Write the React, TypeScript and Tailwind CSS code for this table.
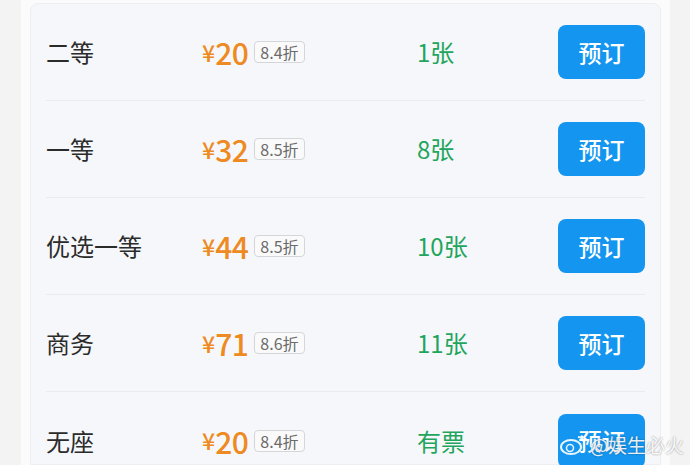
import React from 'react';

const rows = [
  { name: '二等', price: '20', discount: '8.4折', count: '1张' },
  { name: '一等', price: '32', discount: '8.5折', count: '8张' },
  { name: '优选一等', price: '44', discount: '8.5折', count: '10张' },
  { name: '商务', price: '71', discount: '8.6折', count: '11张' },
  { name: '无座', price: '20', discount: '8.4折', count: '有票' },
];

const App: React.FC = () => {
  return (
    <div
      className="w-[690px] h-[465px] overflow-hidden bg-[#f3f3f4] flex relative"
      style={{ fontFamily: '"Noto Sans CJK SC", "Noto Sans", sans-serif' }}
    >
      <div className="w-[21px] shrink-0" />
      <div className="w-[649px] shrink-0 bg-[#fbfbfc] px-[9px] pt-[3px]">
        <div className="h-full bg-[#f6f7fa] rounded-t-[8px] border border-[#eceef2] px-[15px]">
          {rows.map((r, i) => (
            <div
              key={i}
              className={`h-[97px] flex items-center ${i < rows.length - 1 ? 'border-b border-[#e9ebef]' : ''}`}
            >
              <div className="w-[156px] shrink-0 text-[24px] text-[#2b2b2b]">{r.name}</div>
              <div className="w-[215px] shrink-0 flex items-center">
                <span className="text-[23px] text-[#ee8a22] font-medium">¥</span>
                <span className="text-[30px] text-[#ee8a22] font-medium leading-none tracking-[-0.5px]">{r.price}</span>
                <span className="ml-[6px] h-[22px] px-[5px] flex items-center border border-[#d4d6da] rounded-[4px] bg-[#fafafa] text-[16px] text-[#6b6b6b] leading-none">
                  {r.discount}
                </span>
              </div>
              <div className="flex-1 text-[24px] text-[#1fa55d]">{r.count}</div>
              <button className="w-[87px] h-[54px] bg-[#1496f0] rounded-[8px] text-white text-[23px] font-medium">
                预订
              </button>
            </div>
          ))}
        </div>
      </div>
      <div className="flex-1" />
      <div className="absolute right-[6px] bottom-[6px] flex items-center gap-[4px] text-white/90 text-[19px] [text-shadow:0_0_2px_rgba(0,0,0,0.45)]">
        <svg width="26" height="22" viewBox="0 0 26 22">
          <ellipse cx="11" cy="13" rx="10" ry="7" fill="none" stroke="white" strokeWidth="2" opacity="0.9" />
          <circle cx="10" cy="14" r="3.5" fill="none" stroke="white" strokeWidth="1.6" opacity="0.9" />
          <path d="M18 3 a6 6 0 0 1 6 6" stroke="white" strokeWidth="1.8" fill="none" opacity="0.9" />
        </svg>
        <span>@娱生必火</span>
      </div>
    </div>
  );
};

export default App;
